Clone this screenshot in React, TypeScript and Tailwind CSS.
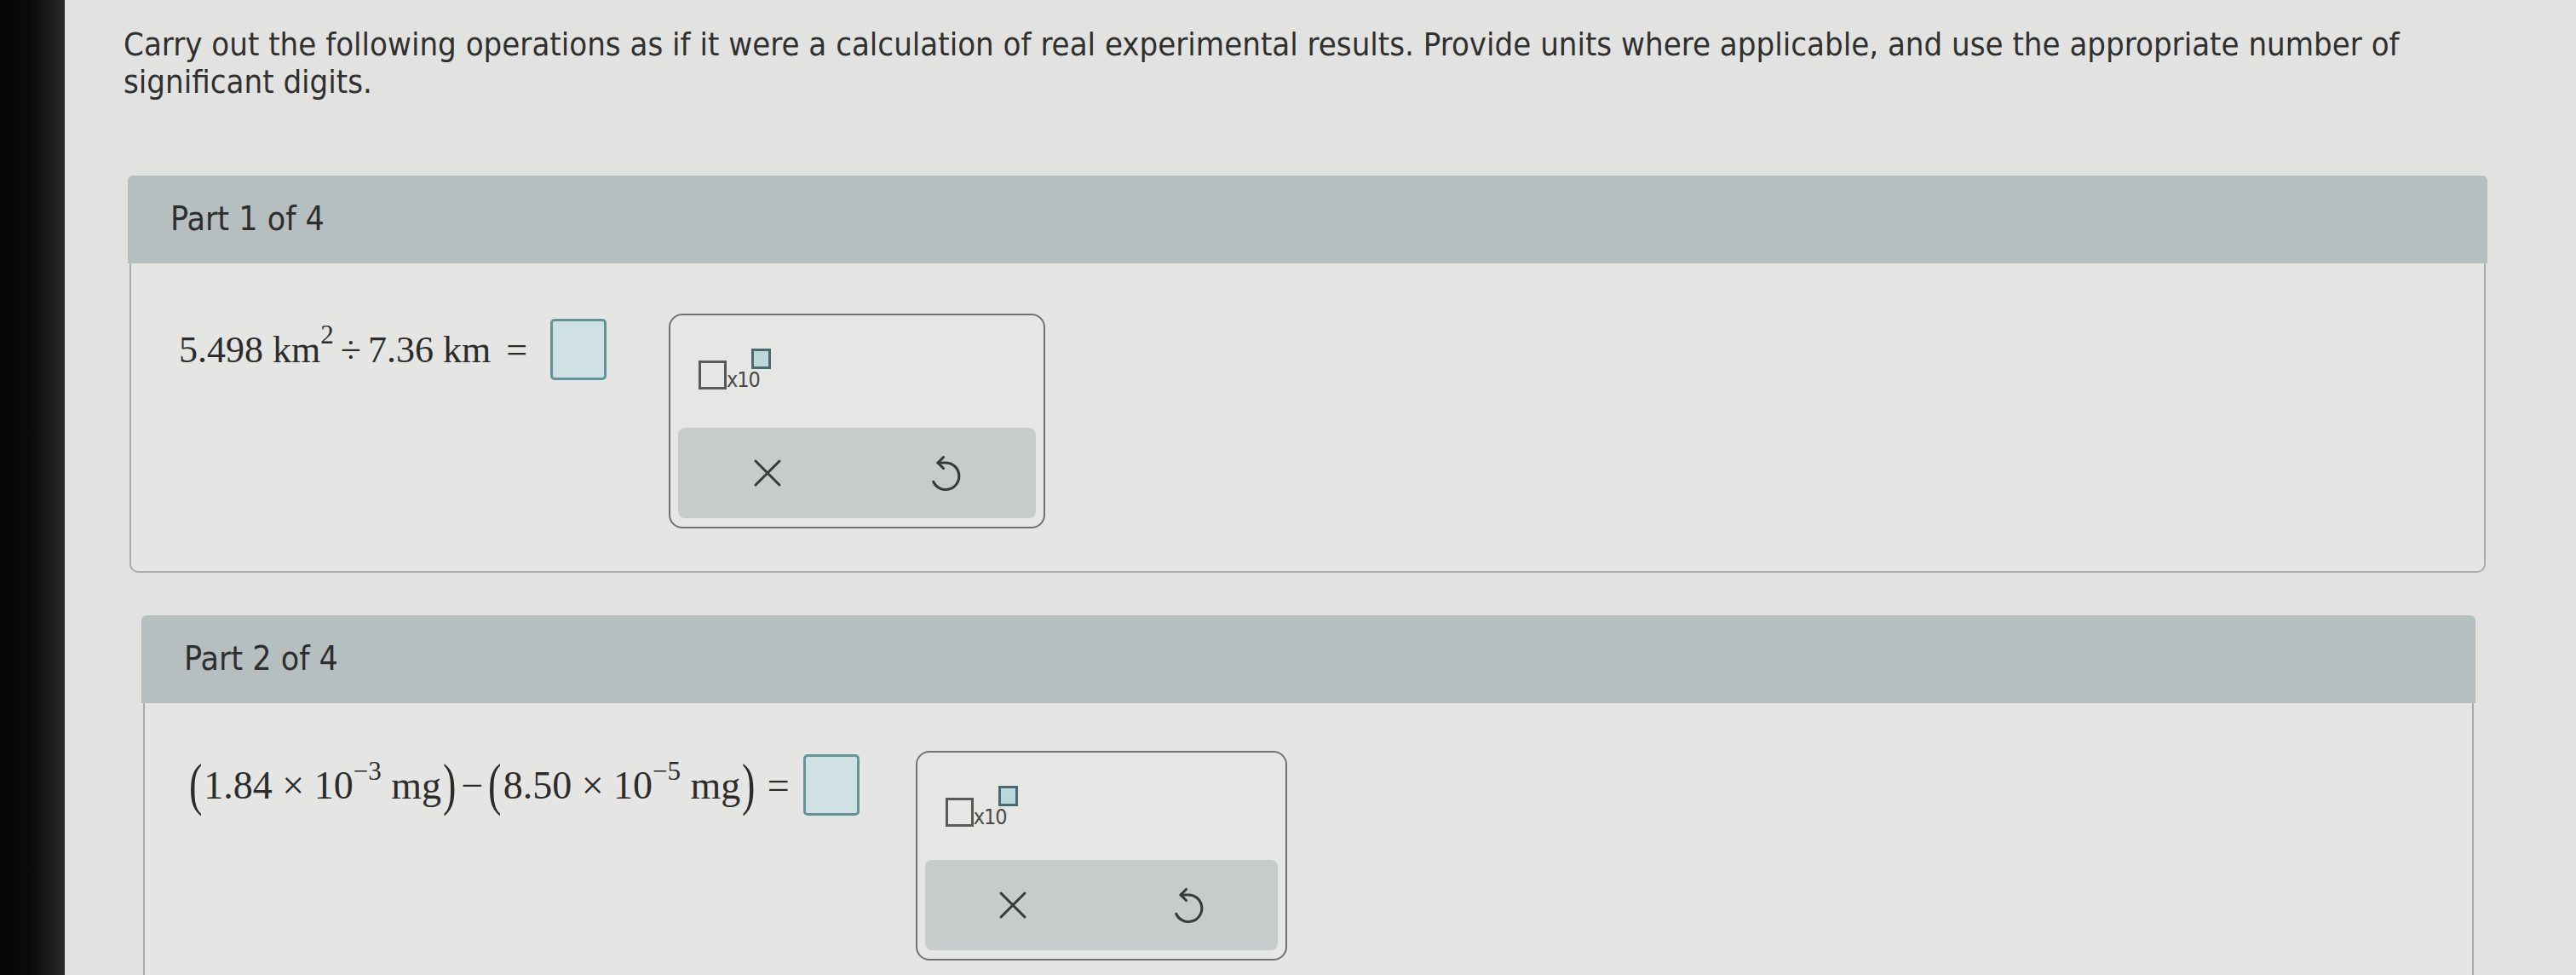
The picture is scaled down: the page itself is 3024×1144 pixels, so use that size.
import { X } from "lucide-react";

const sans = "font-['DejaVu_Sans_Condensed','DejaVu_Sans',sans-serif] font-stretch-condensed";
const serif = "font-['Liberation_Serif','Times_New_Roman',serif]";

function AnswerBox() {
  return <div className="h-[72px] w-[66px] shrink-0 rounded-[5px] border-[3px] border-[#62959b] bg-[#cfe1e3]" />;
}

function UndoIcon() {
  return (
    <svg width="60" height="60" viewBox="0 0 24 24" fill="none" stroke="#3a3a3a" strokeWidth="1.25" strokeLinecap="round" strokeLinejoin="round">
      <path d="M8 7.2h3.6a6.3 6.3 0 1 1-5.7 8.9" />
      <path d="M10.6 4.6 8 7.2l2.6 2.6" />
    </svg>
  );
}

function SciWidget({ w, h }: { w: string; h: string }) {
  return (
    <div className={`flex shrink-0 flex-col rounded-[16px] border-2 border-[#6f7272] bg-[#e6e7e5] px-[9px] pb-[10px] ${w} ${h}`}>
      <div className="flex-1">
        <div className="ml-[24px] mt-[39px] flex items-start">
          <div className="mt-[14px] h-[34px] w-[33px] border-[3px] border-[#575959]" />
          <span className={`${sans} mt-[24px] text-[25px] leading-none tracking-[-1px] text-[#4a4a4a]`}>x10</span>
          <div className="-ml-[10px] h-[24px] w-[23px] border-[3px] border-[#4b6a6f] bg-[#bcd8db]" />
        </div>
      </div>
      <div className="grid h-[106px] grid-cols-2 place-items-center rounded-[8px] bg-[#c6cbcc]">
        <X size={56} strokeWidth={1.3} color="#3a3a3a" />
        <UndoIcon />
      </div>
    </div>
  );
}

function Sup({ children }: { children: React.ReactNode }) {
  return <span className="align-[22px] text-[31px] leading-none">{children}</span>;
}

function Paren({ children }: { children: string }) {
  return <span className="inline-block scale-x-[0.8] scale-y-[1.15] text-[58px] leading-none">{children}</span>;
}

export default function App() {
  return (
    <div className="flex h-[1144px] w-[3024px] overflow-hidden bg-[#e2e3e1] text-[#2c2c2c]">
      <div className="w-[76px] shrink-0 bg-gradient-to-r from-[#040404] via-[#0c0c0c] to-[#2a2a2a]" />
      <div className="flex-1">
        <p className={`${sans} pl-[69px] pt-[30px] text-[38px] leading-[44px] text-[#303030]`}>
          Carry out the following operations as if it were a calculation of real experimental results. Provide units where applicable, and use the appropriate number of
          <br />
          significant digits.
        </p>

        <section className="ml-[74px] mt-[88px] w-[2770px]">
          <div className={`${sans} flex h-[103px] items-center rounded-t-[6px] bg-[#b6bfc0] pl-[50px] text-[39px] text-[#2e2e2e]`}>
            Part 1 of 4
          </div>
          <div className="mx-[2px] flex h-[363px] items-start rounded-b-[10px] border-x-2 border-b-2 border-[#a9adad] bg-[#e5e6e4] pl-[56px] pt-[59px]">
            <div className={`${serif} mt-[6px] flex items-center text-[44px]`}>
              <span className="whitespace-nowrap">
                5.498 km<Sup>2</Sup>
                <span className="mx-[8px]">÷</span>7.36 km
                <span className="ml-[18px]">=</span>
              </span>
              <div className="ml-[27px]">
                <AnswerBox />
              </div>
            </div>
            <div className="ml-[73px]">
              <SciWidget w="w-[442px]" h="h-[252px]" />
            </div>
          </div>
        </section>

        <section className="ml-[90px] mt-[50px] w-[2740px]">
          <div className={`${sans} flex h-[103px] items-center rounded-t-[6px] bg-[#b6bfc0] pl-[50px] text-[39px] text-[#2e2e2e]`}>
            Part 2 of 4
          </div>
          <div className="mx-[2px] flex h-[400px] items-start border-x-2 border-[#a9adad] bg-[#e5e6e4] pl-[50px] pt-[56px]">
            <div className={`${serif} mt-[4px] flex items-center text-[46px]`}>
              <span className="flex items-center whitespace-nowrap">
                <Paren>(</Paren>
                <span>
                  1.84 × 10<Sup>−3</Sup> mg
                </span>
                <Paren>)</Paren>
                <span className="mx-[4px]">−</span>
                <Paren>(</Paren>
                <span>
                  8.50 × 10<Sup>−5</Sup> mg
                </span>
                <Paren>)</Paren>
                <span className="ml-[12px]">=</span>
              </span>
              <div className="ml-[16px]">
                <AnswerBox />
              </div>
            </div>
            <div className="ml-[66px]">
              <SciWidget w="w-[436px]" h="h-[246px]" />
            </div>
          </div>
        </section>
      </div>
    </div>
  );
}
